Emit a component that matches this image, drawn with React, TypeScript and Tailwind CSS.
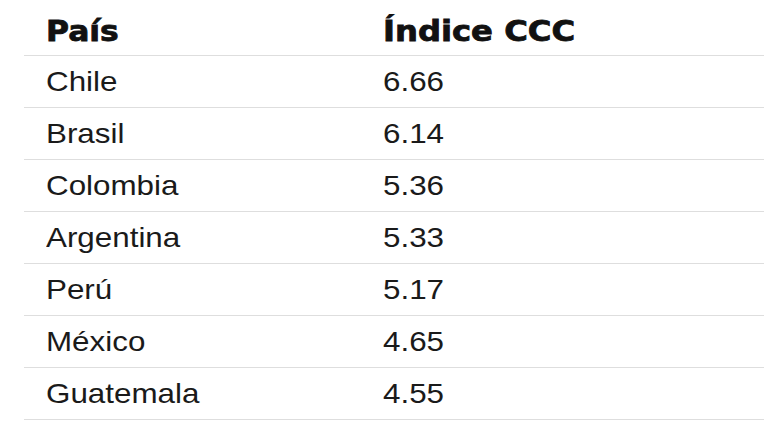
const rows = [
  ['Chile', '6.66'],
  ['Brasil', '6.14'],
  ['Colombia', '5.36'],
  ['Argentina', '5.33'],
  ['Perú', '5.17'],
  ['México', '4.65'],
  ['Guatemala', '4.55'],
]

export default function App() {
  return (
    <div className="w-[768px] h-[432px] overflow-hidden bg-white">
      <div className="ml-[24px] w-[740px]">
        {/* Header */}
        <div
          className="flex items-end h-[56px] pb-[7px] border-b border-[#dedede] text-[#111] font-bold text-[28px] leading-[32px] [-webkit-text-stroke:0.8px_#111]"
          style={{ fontFamily: '"DejaVu Sans", sans-serif' }}
        >
          <div className="w-[359px] pl-[22px]">
            <span className="inline-block origin-left scale-x-[1.12]">País</span>
          </div>
          <div>
            <span className="inline-block origin-left scale-x-[1.15]">Índice CCC</span>
          </div>
        </div>

        {/* Rows */}
        {rows.map(([country, value]) => (
          <div
            key={country}
            className="flex items-center h-[52px] border-b border-[#dedede] text-[#1a1a1a] text-[28px] leading-[32px]"
            style={{ fontFamily: '"Liberation Sans", Arial, sans-serif' }}
          >
            <div className="w-[359px] pl-[22px]">
              <span className="inline-block origin-left scale-x-[1.12]">{country}</span>
            </div>
            <div>
              <span className="inline-block origin-left scale-x-[1.12]">{value}</span>
            </div>
          </div>
        ))}
      </div>
    </div>
  )
}
